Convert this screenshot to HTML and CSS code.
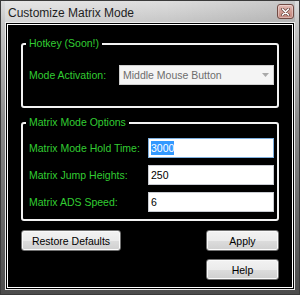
FILE: index.html
```html
<!DOCTYPE html>
<html lang="en">
<head>
    <meta charset="UTF-8">
    <title>Customize Matrix Mode</title>
    <link rel="stylesheet" href="styles.css">
</head>
<body>

<div class="window">
    <!-- Title Bar -->
    <div class="titlebar">
        <span class="title">Customize Matrix Mode</span>
        <button class="close-btn" aria-label="Close">
            <svg width="9" height="8" viewBox="0 0 9 8">
                <path d="M1.5 1 L7.5 7 M7.5 1 L1.5 7" stroke="#6a4640" stroke-width="3" stroke-linecap="round"/>
                <path d="M1.5 1 L7.5 7 M7.5 1 L1.5 7" stroke="#ffffff" stroke-width="1.6" stroke-linecap="round"/>
            </svg>
        </button>
    </div>

    <div class="client">
        <div class="form">
            <!-- Hotkey Group -->
            <fieldset class="group group-hotkey">
                <legend>Hotkey (Soon!)</legend>
                <div class="field">
                    <label>Mode Activation:</label>
                    <div class="combo disabled">
                        <span>Middle Mouse Button</span>
                        <svg class="combo-arrow" width="7" height="4" viewBox="0 0 7 4">
                            <path d="M0 0 H7 L3.5 4 Z" fill="#a9a9a9"/>
                        </svg>
                    </div>
                </div>
            </fieldset>

            <!-- Matrix Options Group -->
            <fieldset class="group group-matrix">
                <legend>Matrix Mode Options</legend>
                <div class="field">
                    <label>Matrix Mode Hold Time:</label>
                    <div class="textbox focused"><span class="selected">3000</span></div>
                </div>
                <div class="field">
                    <label>Matrix Jump Heights:</label>
                    <div class="textbox">250</div>
                </div>
                <div class="field">
                    <label>Matrix ADS Speed:</label>
                    <div class="textbox">6</div>
                </div>
            </fieldset>

            <!-- Buttons -->
            <div class="actions">
                <button class="btn btn-wide">Restore Defaults</button>
                <div class="actions-right">
                    <button class="btn">Apply</button>
                    <button class="btn">Help</button>
                </div>
            </div>
        </div>
    </div>
</div>

</body>
</html>
```

FILE: styles.css
```css
/* General Styles */
body {
    margin: 0;
    padding: 0;
    overflow: hidden;
    background-color: #000;
}

.window {
    width: 300px;
    height: 295px;
    box-sizing: border-box;
    border: 1px solid #3a3a3a;
    padding: 0 4px 4px;
    display: flex;
    flex-direction: column;
    background: linear-gradient(#dedede 0, #c6c6c6 22px, #8c8c8c 120px, #4c4c4c 100%);
}

/* Title Bar */
.titlebar {
    height: 21px;
    flex: none;
    display: flex;
    align-items: center;
    padding-left: 3px;
    background: linear-gradient(to right, rgba(255, 255, 255, 0.25), rgba(255, 255, 255, 0) 55%, rgba(0, 0, 0, 0.1));
}

.title {
    font-family: "Liberation Sans", Arial, sans-serif;
    font-size: 12px;
    color: #1e1e1e;
    padding-top: 2px;
}

.close-btn {
    margin-left: auto;
    margin-right: 1px;
    width: 17px;
    height: 15px;
    padding: 0;
    border: 1px solid #704a44;
    border-radius: 3px;
    background: linear-gradient(#e6bdb6, #cf9a91 50%, #c4887e);
    box-shadow: inset 0 0 0 1px rgba(255, 255, 255, 0.35);
    display: flex;
    align-items: center;
    justify-content: center;
}

/* Client Area */
.client {
    flex: 1;
    display: flex;
    border: 1px solid #ececec;
    padding: 1px;
    background-color: #000;
}

.form {
    flex: 1;
    border: 1px solid #fff;
    background-color: #000;
    padding: 0 13px;
    font-family: "Liberation Sans", Arial, sans-serif;
    font-size: 10.5px;
    color: #32cd32;
}

/* Group Boxes */
.group {
    margin: 0;
    min-width: 0;
    border: 2px solid #f2f2f2;
    border-radius: 3px;
    padding: 0 3px 0 6px;
}

.group legend {
    line-height: 13px;
    padding: 0 3px;
    margin-left: -3px;
}

.group-hotkey {
    margin-top: 12px;
    padding-top: 15px;
    padding-bottom: 21px;
}

.group-matrix {
    margin-top: 8px;
    padding-top: 9px;
    padding-bottom: 7px;
}

.field {
    height: 20px;
    display: flex;
    align-items: center;
    justify-content: space-between;
}

.field + .field {
    margin-top: 7px;
}

/* Combo Box */
.combo {
    width: 155px;
    height: 20px;
    box-sizing: border-box;
    display: flex;
    align-items: center;
    padding-left: 3px;
    border: 1px solid #cfcfcf;
    background-color: #f4f4f4;
    color: #6d6d6d;
}

.combo-arrow {
    margin-left: auto;
    margin-right: 4px;
}

/* Text Boxes */
.textbox {
    width: 126px;
    height: 20px;
    box-sizing: border-box;
    display: flex;
    align-items: center;
    padding-left: 2px;
    border: 1px solid #c9ccd2;
    background-color: #fff;
    color: #000;
}

.textbox.focused {
    border-color: #7eb0e0;
}

.selected {
    background-color: #3399ff;
    color: #fff;
    line-height: 14px;
}

/* Buttons */
.actions {
    margin-top: 9px;
    display: flex;
    justify-content: space-between;
    align-items: flex-start;
}

.actions-right {
    display: flex;
    flex-direction: column;
    gap: 8px;
}

.btn {
    width: 73px;
    height: 21px;
    padding: 0;
    font-family: "Liberation Sans", Arial, sans-serif;
    font-size: 10.5px;
    color: #000;
    border: 1px solid #707070;
    border-radius: 3px;
    background: linear-gradient(#f2f2f2 0, #ebebeb 50%, #dddddd 50%, #cfcfcf 100%);
    box-shadow: inset 0 0 0 1px #fafafa;
}

.btn-wide {
    width: 100px;
}
```
